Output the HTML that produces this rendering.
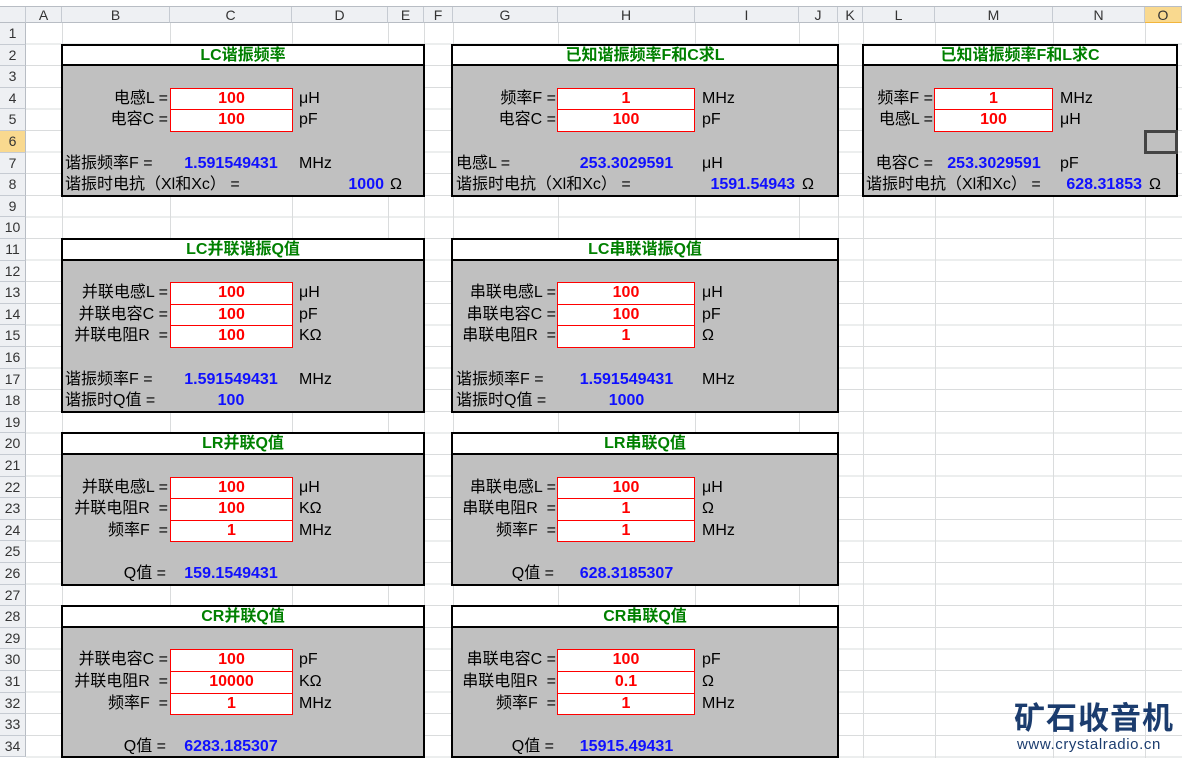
<!DOCTYPE html>
<html><head><meta charset="utf-8"><style>
*{margin:0;padding:0;box-sizing:border-box}
body{width:1182px;height:758px;overflow:hidden;background:#fff;position:relative;font-family:"Liberation Sans","Noto Sans CJK SC",sans-serif;font-size:16px;color:#000}
.a{position:absolute;white-space:nowrap;line-height:21.6px;height:21.6px}
.v{position:absolute;top:23px;bottom:0;width:1px;background:#dadcdd}
.grid{position:absolute;left:26px;top:23px;right:0;bottom:0;background:repeating-linear-gradient(to bottom,transparent 0 20.6px,#dadcdd 20.6px 21.6px)}
.ch{position:absolute;top:7px;height:16px;line-height:16px;text-align:center;font-size:14px;color:#333;background:#eef0f3;border-right:1px solid #c6cbd2;border-bottom:1px solid #b8bdc4}
.rh{position:absolute;left:0;width:26px;height:21.6px;line-height:21px;text-align:center;font-size:14px;color:#333;background:#eef0f3;border-right:1px solid #b8bdc4;border-bottom:1px solid #c6cbd2}
.box{position:absolute;border:2px solid #000;background:#c0c0c0}
.box .t{position:absolute;left:0;right:0;top:0;height:20.6px;background:#fff;border-bottom:2px solid #000;text-align:center;color:#008000;font-weight:bold;line-height:20px}
.in{position:absolute;background:#fff;border:1px solid #f00;color:#f00;font-weight:bold;text-align:center;line-height:20px;height:22.6px}
.b{color:#1010ff;font-weight:bold;text-align:center}
.r{text-align:right}
</style></head><body>
<div style="position:absolute;left:0;top:0;width:1182px;height:7px;background:#fff;border-bottom:1px solid #b8bdc4"></div>
<div class="grid"></div>
<div class="v" style="left:62px"></div><div class="v" style="left:170px"></div><div class="v" style="left:292px"></div><div class="v" style="left:388px"></div><div class="v" style="left:424px"></div><div class="v" style="left:453px"></div><div class="v" style="left:558px"></div><div class="v" style="left:695px"></div><div class="v" style="left:799px"></div><div class="v" style="left:838px"></div><div class="v" style="left:863px"></div><div class="v" style="left:935px"></div><div class="v" style="left:1053px"></div><div class="v" style="left:1145px"></div>

<div class="ch" style="left:0;width:26px"></div>
<div class="ch" style="left:26px;width:36px">A</div>
<div class="ch" style="left:62px;width:108px">B</div>
<div class="ch" style="left:170px;width:122px">C</div>
<div class="ch" style="left:292px;width:96px">D</div>
<div class="ch" style="left:388px;width:36px">E</div>
<div class="ch" style="left:424px;width:29px">F</div>
<div class="ch" style="left:453px;width:105px">G</div>
<div class="ch" style="left:558px;width:137px">H</div>
<div class="ch" style="left:695px;width:104px">I</div>
<div class="ch" style="left:799px;width:39px">J</div>
<div class="ch" style="left:838px;width:25px">K</div>
<div class="ch" style="left:863px;width:72px">L</div>
<div class="ch" style="left:935px;width:118px">M</div>
<div class="ch" style="left:1053px;width:92px">N</div>
<div class="ch" style="left:1145px;width:37px;background:#f9d98f;border-bottom-color:#f2b53b">O</div>

<div class="rh" style="top:23px">1</div><div class="rh" style="top:44.6px">2</div><div class="rh" style="top:66.2px">3</div><div class="rh" style="top:87.8px">4</div><div class="rh" style="top:109.4px">5</div><div class="rh" style="top:131px;background:#f9d98f">6</div><div class="rh" style="top:152.6px">7</div><div class="rh" style="top:174.2px">8</div><div class="rh" style="top:195.8px">9</div><div class="rh" style="top:217.4px">10</div><div class="rh" style="top:239px">11</div><div class="rh" style="top:260.6px">12</div><div class="rh" style="top:282.2px">13</div><div class="rh" style="top:303.8px">14</div><div class="rh" style="top:325.4px">15</div><div class="rh" style="top:347px">16</div><div class="rh" style="top:368.6px">17</div><div class="rh" style="top:390.2px">18</div><div class="rh" style="top:411.8px">19</div><div class="rh" style="top:433.4px">20</div><div class="rh" style="top:455px">21</div><div class="rh" style="top:476.6px">22</div><div class="rh" style="top:498.2px">23</div><div class="rh" style="top:519.8px">24</div><div class="rh" style="top:541.4px">25</div><div class="rh" style="top:563px">26</div><div class="rh" style="top:584.6px">27</div><div class="rh" style="top:606.2px">28</div><div class="rh" style="top:627.8px">29</div><div class="rh" style="top:649.4px">30</div><div class="rh" style="top:671px">31</div><div class="rh" style="top:692.6px">32</div><div class="rh" style="top:714.2px">33</div><div class="rh" style="top:735.8px">34</div>

<div class="box" style="left:61px;top:43.6px;width:364px;height:153.2px"><div class="t">LC谐振频率</div></div>
<div class="box" style="left:451px;top:43.6px;width:388px;height:153.2px"><div class="t">已知谐振频率F和C求L</div></div>
<div class="box" style="left:862px;top:43.6px;width:316px;height:153.2px"><div class="t">已知谐振频率F和L求C</div></div>
<div class="box" style="left:61px;top:238px;width:364px;height:174.8px"><div class="t">LC并联谐振Q值</div></div>
<div class="box" style="left:451px;top:238px;width:388px;height:174.8px"><div class="t">LC串联谐振Q值</div></div>
<div class="box" style="left:61px;top:432.4px;width:364px;height:153.2px"><div class="t">LR并联Q值</div></div>
<div class="box" style="left:451px;top:432.4px;width:388px;height:153.2px"><div class="t">LR串联Q值</div></div>
<div class="box" style="left:61px;top:605.2px;width:364px;height:153.2px"><div class="t">CR并联Q值</div></div>
<div class="box" style="left:451px;top:605.2px;width:388px;height:153.2px"><div class="t">CR串联Q值</div></div>

<!-- Box 1 -->
<div class="a r" style="left:62px;width:106px;top:87.8px">电感L =</div>
<div class="in" style="left:170px;width:123px;top:87.8px">100</div>
<div class="a" style="left:299px;top:87.8px">μH</div>
<div class="a r" style="left:62px;width:106px;top:109.4px">电容C =</div>
<div class="in" style="left:170px;width:123px;top:109.4px">100</div>
<div class="a" style="left:299px;top:109.4px">pF</div>
<div class="a" style="left:65px;top:152.6px">谐振频率F =</div>
<div class="a b" style="left:170px;width:122px;top:152.6px">1.591549431</div>
<div class="a" style="left:299px;top:152.6px">MHz</div>
<div class="a" style="left:65px;top:174.2px">谐振时电抗（Xl和Xc） =</div>
<div class="a b r" style="left:292px;width:92px;top:174.2px">1000</div>
<div class="a" style="left:390px;top:174.2px">Ω</div>

<!-- Box 2 -->
<div class="a r" style="left:453px;width:103px;top:87.8px">频率F =</div>
<div class="in" style="left:557px;width:138px;top:87.8px">1</div>
<div class="a" style="left:702px;top:87.8px">MHz</div>
<div class="a r" style="left:453px;width:103px;top:109.4px">电容C =</div>
<div class="in" style="left:557px;width:138px;top:109.4px">100</div>
<div class="a" style="left:702px;top:109.4px">pF</div>
<div class="a" style="left:456px;top:152.6px">电感L =</div>
<div class="a b" style="left:558px;width:137px;top:152.6px">253.3029591</div>
<div class="a" style="left:702px;top:152.6px">μH</div>
<div class="a" style="left:456px;top:174.2px">谐振时电抗（Xl和Xc） =</div>
<div class="a b r" style="left:695px;width:100px;top:174.2px">1591.54943</div>
<div class="a" style="left:802px;top:174.2px">Ω</div>

<!-- Box 3 -->
<div class="a r" style="left:863px;width:70px;top:87.8px">频率F =</div>
<div class="in" style="left:934px;width:119px;top:87.8px">1</div>
<div class="a" style="left:1060px;top:87.8px">MHz</div>
<div class="a r" style="left:863px;width:70px;top:109.4px">电感L =</div>
<div class="in" style="left:934px;width:119px;top:109.4px">100</div>
<div class="a" style="left:1060px;top:109.4px">μH</div>
<div class="a r" style="left:863px;width:70px;top:152.6px">电容C =</div>
<div class="a b" style="left:935px;width:118px;top:152.6px">253.3029591</div>
<div class="a" style="left:1060px;top:152.6px">pF</div>
<div class="a" style="left:866px;top:174.2px">谐振时电抗（Xl和Xc） =</div>
<div class="a b r" style="left:1053px;width:89px;top:174.2px">628.31853</div>
<div class="a" style="left:1149px;top:174.2px">Ω</div>
<div style="position:absolute;left:1144px;top:130px;width:34px;height:24px;border:3px solid #444"></div>

<!-- Box 4 -->
<div class="a r" style="left:62px;width:106px;top:282.2px">并联电感L =</div>
<div class="in" style="left:170px;width:123px;top:282.2px">100</div>
<div class="a" style="left:299px;top:282.2px">μH</div>
<div class="a r" style="left:62px;width:106px;top:303.8px">并联电容C =</div>
<div class="in" style="left:170px;width:123px;top:303.8px">100</div>
<div class="a" style="left:299px;top:303.8px">pF</div>
<div class="a r" style="left:62px;width:106px;top:325.4px">并联电阻R &nbsp;=</div>
<div class="in" style="left:170px;width:123px;top:325.4px">100</div>
<div class="a" style="left:299px;top:325.4px">KΩ</div>
<div class="a" style="left:65px;top:368.6px">谐振频率F =</div>
<div class="a b" style="left:170px;width:122px;top:368.6px">1.591549431</div>
<div class="a" style="left:299px;top:368.6px">MHz</div>
<div class="a" style="left:65px;top:390.2px">谐振时Q值 =</div>
<div class="a b" style="left:170px;width:122px;top:390.2px">100</div>

<!-- Box 5 -->
<div class="a r" style="left:453px;width:103px;top:282.2px">串联电感L =</div>
<div class="in" style="left:557px;width:138px;top:282.2px">100</div>
<div class="a" style="left:702px;top:282.2px">μH</div>
<div class="a r" style="left:453px;width:103px;top:303.8px">串联电容C =</div>
<div class="in" style="left:557px;width:138px;top:303.8px">100</div>
<div class="a" style="left:702px;top:303.8px">pF</div>
<div class="a r" style="left:453px;width:103px;top:325.4px">串联电阻R &nbsp;=</div>
<div class="in" style="left:557px;width:138px;top:325.4px">1</div>
<div class="a" style="left:702px;top:325.4px">Ω</div>
<div class="a" style="left:456px;top:368.6px">谐振频率F =</div>
<div class="a b" style="left:558px;width:137px;top:368.6px">1.591549431</div>
<div class="a" style="left:702px;top:368.6px">MHz</div>
<div class="a" style="left:456px;top:390.2px">谐振时Q值 =</div>
<div class="a b" style="left:558px;width:137px;top:390.2px">1000</div>

<!-- Box 6 -->
<div class="a r" style="left:62px;width:106px;top:476.6px">并联电感L =</div>
<div class="in" style="left:170px;width:123px;top:476.6px">100</div>
<div class="a" style="left:299px;top:476.6px">μH</div>
<div class="a r" style="left:62px;width:106px;top:498.2px">并联电阻R &nbsp;=</div>
<div class="in" style="left:170px;width:123px;top:498.2px">100</div>
<div class="a" style="left:299px;top:498.2px">KΩ</div>
<div class="a r" style="left:62px;width:106px;top:519.8px">频率F &nbsp;=</div>
<div class="in" style="left:170px;width:123px;top:519.8px">1</div>
<div class="a" style="left:299px;top:519.8px">MHz</div>
<div class="a r" style="left:62px;width:104px;top:563px">Q值 =</div>
<div class="a b" style="left:170px;width:122px;top:563px">159.1549431</div>

<!-- Box 7 -->
<div class="a r" style="left:453px;width:103px;top:476.6px">串联电感L =</div>
<div class="in" style="left:557px;width:138px;top:476.6px">100</div>
<div class="a" style="left:702px;top:476.6px">μH</div>
<div class="a r" style="left:453px;width:103px;top:498.2px">串联电阻R &nbsp;=</div>
<div class="in" style="left:557px;width:138px;top:498.2px">1</div>
<div class="a" style="left:702px;top:498.2px">Ω</div>
<div class="a r" style="left:453px;width:103px;top:519.8px">频率F &nbsp;=</div>
<div class="in" style="left:557px;width:138px;top:519.8px">1</div>
<div class="a" style="left:702px;top:519.8px">MHz</div>
<div class="a r" style="left:453px;width:101px;top:563px">Q值 =</div>
<div class="a b" style="left:558px;width:137px;top:563px">628.3185307</div>

<!-- Box 8 -->
<div class="a r" style="left:62px;width:106px;top:649.4px">并联电容C =</div>
<div class="in" style="left:170px;width:123px;top:649.4px">100</div>
<div class="a" style="left:299px;top:649.4px">pF</div>
<div class="a r" style="left:62px;width:106px;top:671px">并联电阻R &nbsp;=</div>
<div class="in" style="left:170px;width:123px;top:671px">10000</div>
<div class="a" style="left:299px;top:671px">KΩ</div>
<div class="a r" style="left:62px;width:106px;top:692.6px">频率F &nbsp;=</div>
<div class="in" style="left:170px;width:123px;top:692.6px">1</div>
<div class="a" style="left:299px;top:692.6px">MHz</div>
<div class="a r" style="left:62px;width:104px;top:735.8px">Q值 =</div>
<div class="a b" style="left:170px;width:122px;top:735.8px">6283.185307</div>

<!-- Box 9 -->
<div class="a r" style="left:453px;width:103px;top:649.4px">串联电容C =</div>
<div class="in" style="left:557px;width:138px;top:649.4px">100</div>
<div class="a" style="left:702px;top:649.4px">pF</div>
<div class="a r" style="left:453px;width:103px;top:671px">串联电阻R &nbsp;=</div>
<div class="in" style="left:557px;width:138px;top:671px">0.1</div>
<div class="a" style="left:702px;top:671px">Ω</div>
<div class="a r" style="left:453px;width:103px;top:692.6px">频率F &nbsp;=</div>
<div class="in" style="left:557px;width:138px;top:692.6px">1</div>
<div class="a" style="left:702px;top:692.6px">MHz</div>
<div class="a r" style="left:453px;width:101px;top:735.8px">Q值 =</div>
<div class="a b" style="left:558px;width:137px;top:735.8px">15915.49431</div>

<!-- Logo -->
<div style="position:absolute;left:1014px;top:697px;width:160px;font-size:31px;line-height:38px;font-weight:bold;color:#1b3c6e;letter-spacing:1px;font-family:'Noto Sans CJK SC','WenQuanYi Zen Hei',sans-serif;white-space:nowrap">矿石收音机</div>
<div style="position:absolute;left:1017px;top:736px;font-size:15px;line-height:18px;color:#1b3c6e;white-space:nowrap;letter-spacing:0.6px">www.crystalradio.cn</div>
</body></html>
